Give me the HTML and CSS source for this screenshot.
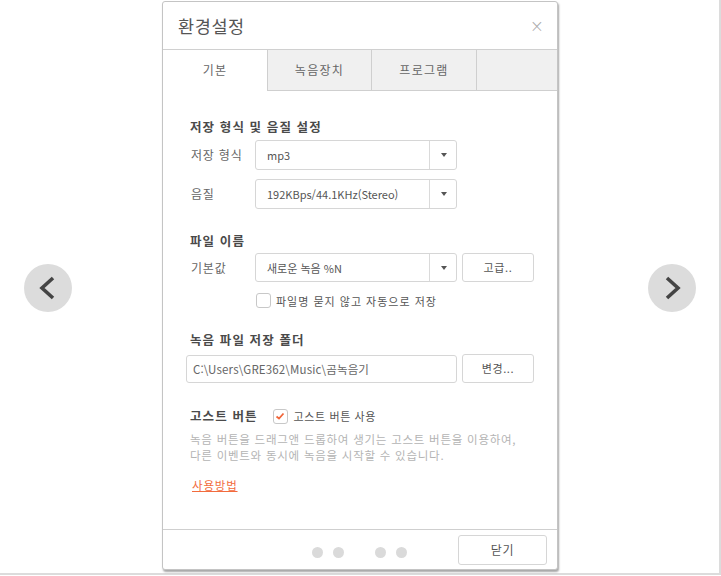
FILE: index.html
```html
<!DOCTYPE html>
<html lang="ko">
<head>
<meta charset="utf-8">
<link rel="stylesheet" href="styles.css">
</head>
<body>
<div class="frame">
  <div class="side side-left">
    <button class="nav" aria-label="이전">
      <svg width="48" height="48" viewBox="0 0 48 48"><path d="M29 14 L18 24 L29 34" fill="none" stroke="#444" stroke-width="3.6"/></svg>
    </button>
  </div>
  <div class="dialog">
    <div class="header">
      <span class="title">환경설정</span>
      <span class="close">×</span>
    </div>
    <div class="tabs">
      <div class="tab active">기본</div>
      <div class="tab">녹음장치</div>
      <div class="tab">프로그램</div>
      <div class="tab empty"></div>
    </div>
    <div class="content">
      <div class="section-title t1">저장 형식 및 음질 설정</div>
      <div class="row r1">
        <span class="label">저장 형식</span>
        <div class="select"><span class="val">mp3</span><span class="arrow"></span></div>
      </div>
      <div class="row r2">
        <span class="label">음질</span>
        <div class="select"><span class="val">192KBps/44.1KHz(Stereo)</span><span class="arrow"></span></div>
      </div>
      <div class="section-title t2">파일 이름</div>
      <div class="row r3">
        <span class="label">기본값</span>
        <div class="select short"><span class="val">새로운 녹음 %N</span><span class="arrow"></span></div>
        <div class="btn">고급..</div>
      </div>
      <div class="checkrow">
        <span class="checkbox"></span>
        <span class="checktext">파일명 묻지 않고 자동으로 저장</span>
      </div>
      <div class="section-title t3">녹음 파일 저장 폴더</div>
      <div class="row r4">
        <div class="input">C:\Users\GRE362\Music\곰녹음기</div>
        <div class="btn">변경...</div>
      </div>
      <div class="ghost">
        <span class="section-title inline">고스트 버튼</span>
        <span class="checkbox checked"><svg width="12" height="12" viewBox="0 0 12 12"><path d="M2.5 6.5 L5 8.5 L9.5 3.5" fill="none" stroke="#f0663a" stroke-width="1.8"/></svg></span>
        <span class="checktext dark">고스트 버튼 사용</span>
      </div>
      <p class="desc">녹음 버튼을 드래그앤 드롭하여 생기는 고스트 버튼을 이용하여,<br>다른 이벤트와 동시에 녹음을 시작할 수 있습니다.</p>
      <a class="howto" href="#">사용방법</a>
    </div>
    <div class="footer">
      <div class="dots">
        <span class="dot"></span><span class="dot"></span>
        <span class="dot gap"></span><span class="dot"></span>
      </div>
      <div class="btn closebtn">닫기</div>
    </div>
  </div>
  <div class="side side-right">
    <button class="nav" aria-label="다음">
      <svg width="48" height="48" viewBox="0 0 48 48"><path d="M19 14 L30 24 L19 34" fill="none" stroke="#444" stroke-width="3.6"/></svg>
    </button>
  </div>
</div>
</body>
</html>
```
FILE: styles.css
```css
* { box-sizing: border-box; }
html, body { margin: 0; padding: 0; background: #fff; }
body {
  font-family: "Noto Sans CJK KR", "Noto Sans", sans-serif;
  color: #555;
  width: 721px;
  height: 576px;
  overflow: hidden;
}
.frame {
  width: 721px;
  height: 575px;
  border-right: 2px solid #dcdcdc;
  border-bottom: 2px solid #dcdcdc;
  display: flex;
  align-items: flex-start;
}
.side {
  height: 573px;
  display: flex;
  align-items: center;
}
.side-left { width: 162px; padding-left: 24px; }
.side-right { width: 157px; padding-left: 90px; }
.nav {
  width: 48px;
  height: 48px;
  border-radius: 50%;
  border: none;
  background: #dcdcdc;
  padding: 0;
  display: block;
  margin-top: 3px;
}
.nav svg { display: block; }

.dialog {
  width: 396px;
  height: 569px;
  margin-top: 1px;
  border: 1px solid #c4c4c4;
  border-radius: 3px;
  box-shadow: 1px 2px 2px rgba(0,0,0,0.35);
  background: #fff;
  display: flex;
  flex-direction: column;
}
.header {
  height: 48px;
  border-bottom: 1px solid #d0d0d0;
  display: flex;
  align-items: center;
  justify-content: space-between;
  padding: 0 13px 0 15px;
}
.title { font-size: 17.5px; color: #555; line-height: 20px; letter-spacing: 0.6px; }
.close { font-size: 17px; color: #aaa; line-height: 20px; font-family: "DejaVu Sans", sans-serif; font-weight: 300; }

.tabs { display: flex; height: 41px; }
.tab {
  height: 41px;
  font-size: 12px;
  letter-spacing: 1.3px;
  line-height: 40px;
  text-align: center;
  color: #666;
  background: #f0f0f0;
  border-left: 1px solid #cfcfcf;
  border-bottom: 1px solid #cfcfcf;
}
.tab.active { width: 104px; background: #fff; border-left: none; border-bottom-color: #fff; }
.tab:nth-child(2) { width: 104px; }
.tab:nth-child(3) { width: 105px; }
.tab.empty { flex: 1; }

.content { flex: 1; padding: 0 0 0 23px; }
.section-title {
  font-size: 12.5px;
  font-weight: bold;
  letter-spacing: 1.1px;
  color: #4a4a4a;
  line-height: 18px;
  padding-left: 4px;
}
.section-title.inline { padding-left: 0; }
.t1 { margin-top: 27px; }
.t2 { margin-top: 23px; }
.t3 { margin-top: 23px; }

.row { display: flex; align-items: center; }
.r1 { margin-top: 4px; }
.r2 { margin-top: 9px; }
.r3 { margin-top: 3px; }
.r4 { margin-top: 5px; }
.label {
  width: 69px;
  padding-left: 5px;
  font-size: 12px;
  letter-spacing: 0.8px;
  line-height: 16px;
  color: #666;
}
.select {
  width: 202px;
  height: 30px;
  border: 1px solid #d6d6d6;
  border-radius: 3px;
  display: flex;
  align-items: stretch;
}
.r3 .select { height: 29px; }
.select .val {
  flex: 1;
  padding-left: 11px;
  font-size: 11px;
  line-height: 28px;
  color: #555;
}
.select .arrow {
  width: 27px;
  border-left: 1px solid #dadada;
  position: relative;
}
.select .arrow::after {
  content: "";
  position: absolute;
  left: 11px;
  top: 12px;
  border-left: 3px solid transparent;
  border-right: 3px solid transparent;
  border-top: 4px solid #555;
}
.btn {
  width: 72px;
  height: 29px;
  margin-left: 5px;
  border: 1px solid #d6d6d6;
  border-radius: 3px;
  font-size: 11px;
  letter-spacing: 0.6px;
  line-height: 27px;
  text-align: center;
  color: #555;
}
.input {
  width: 271px;
  height: 28px;
  border: 1px solid #d6d6d6;
  border-radius: 3px;
  font-size: 11.5px;
  letter-spacing: 0.15px;
  line-height: 26px;
  padding-left: 6px;
  color: #666;
}
.checkrow {
  margin-top: 11px;
  margin-left: 70px;
  display: flex;
  align-items: center;
  height: 15px;
}
.checkbox {
  width: 15px;
  height: 15px;
  border: 1px solid #c8c8c8;
  border-radius: 3px;
  display: inline-flex;
  align-items: center;
  justify-content: center;
  background: #fff;
}
.checktext {
  margin-left: 5px;
  font-size: 11px;
  letter-spacing: 1px;
  line-height: 14px;
  color: #555;
}
.checktext.dark { color: #555; margin-left: 6px; font-size: 11px; letter-spacing: 0.6px; }
.ghost {
  margin-top: 24px;
  padding-left: 4px;
  display: flex;
  align-items: center;
  height: 18px;
}
.ghost .checkbox { margin-left: 15px; }
.desc {
  margin: 6px 0 0 4px;
  font-size: 11.5px;
  letter-spacing: 0.75px;
  line-height: 16px;
  color: #b4b4b4;
}
.howto {
  display: inline-block;
  margin: 13px 0 0 6px;
  font-size: 11.5px;
  letter-spacing: 0.8px;
  line-height: 18px;
  color: #f26b3d;
  text-decoration: underline;
}
.footer {
  height: 40px;
  border-top: 1px solid #cfcfcf;
  display: flex;
  align-items: center;
  padding-left: 149px;
}
.dots { display: flex; align-items: center; margin-top: 6px; }
.dot {
  width: 11px;
  height: 11px;
  border-radius: 50%;
  background: #dadada;
  margin-right: 10px;
}
.dot.gap { margin-left: 21px; }
.closebtn {
  margin-left: 41px;
  width: 89px;
  height: 30px;
  line-height: 28px;
  font-size: 12px;
  margin-top: 1px;
}
```
